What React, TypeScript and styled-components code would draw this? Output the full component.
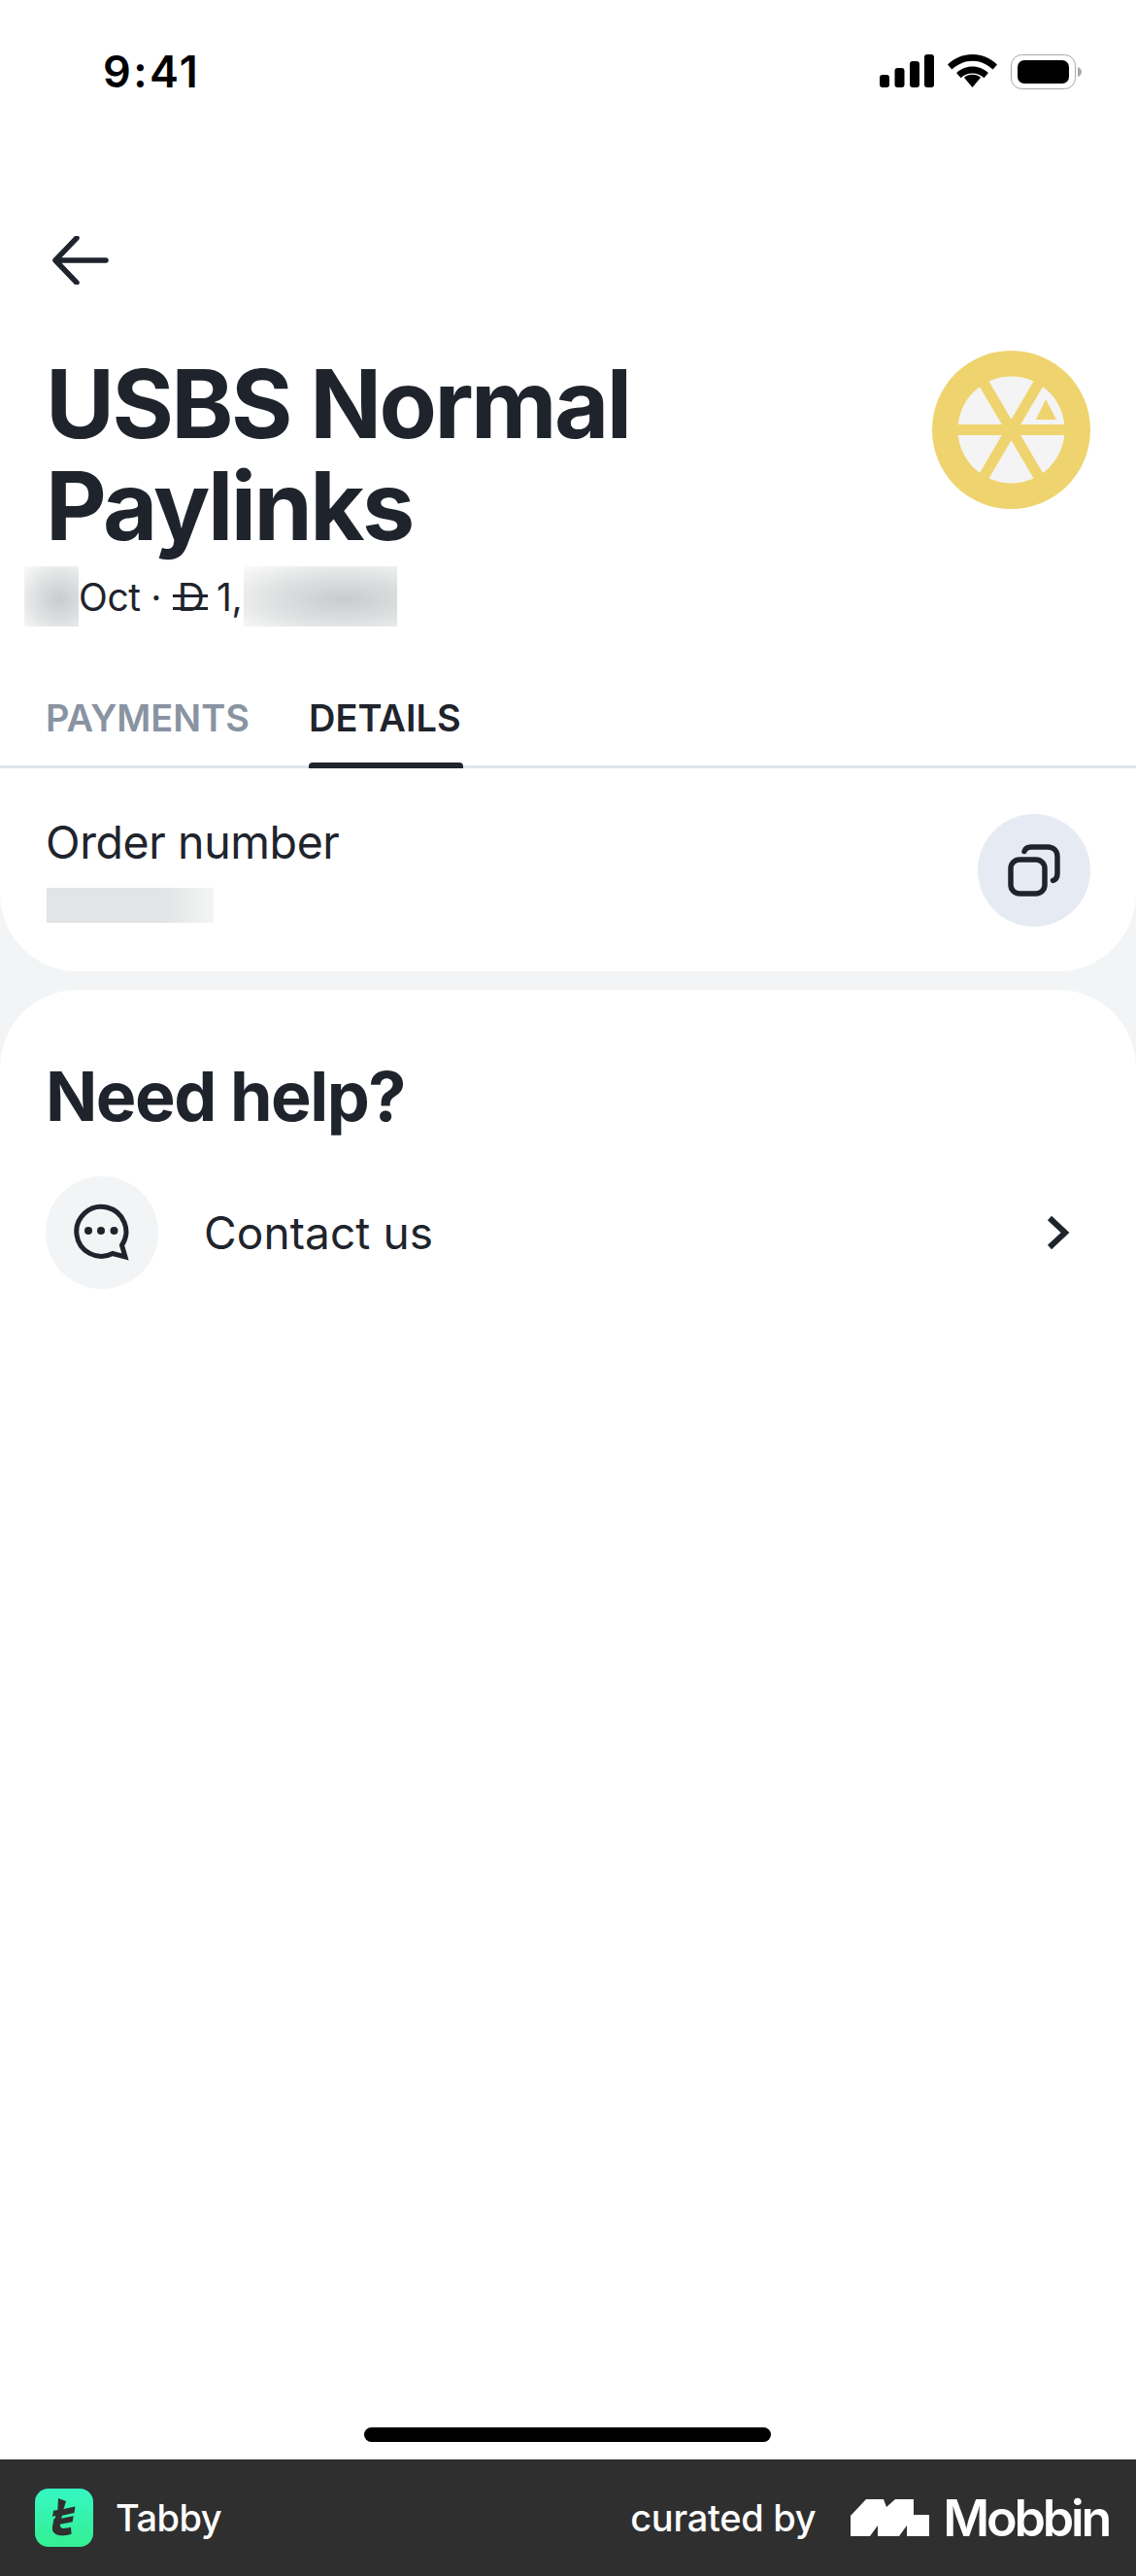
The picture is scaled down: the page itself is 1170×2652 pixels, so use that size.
import React from 'react';
import styled, { createGlobalStyle } from 'styled-components';

const GlobalStyle = createGlobalStyle`
  html, body {
    margin: 0;
    padding: 0;
    background: #fff;
  }
  * {
    box-sizing: border-box;
  }
`;

const ink = '#1f242c';
const font = `Inter, "Liberation Sans", sans-serif`;

const Screen = styled.div`
  width: 1170px;
  height: 2652px;
  display: flex;
  flex-direction: column;
  background: #f2f4f5;
  font-family: ${font};
  color: ${ink};
  overflow: hidden;
`;

const StatusBar = styled.div`
  height: 146px;
  flex-shrink: 0;
  padding: 52px 55px 0 106px;
  display: flex;
  justify-content: space-between;
  align-items: flex-start;
  background: #fff;
`;

const Clock = styled.div`
  font-size: 45px;
  line-height: 44px;
  font-weight: 600;
  letter-spacing: 2.4px;
  color: #000;
`;

const StatusIcons = styled.div`
  display: flex;
  align-items: flex-start;
  gap: 14px;
  padding-top: 4px;
`;

const Header = styled.div`
  background: #fff;
  flex-shrink: 0;
  padding: 0 47px;
`;

const BackRow = styled.div`
  height: 217px;
  padding: 97px 0 0 7px;
`;

const TitleRow = styled.div`
  display: flex;
  justify-content: space-between;
  align-items: flex-start;
`;

const Title = styled.h1`
  margin: 0;
  font-size: 97px;
  line-height: 105px;
  font-weight: 700;
  letter-spacing: -2.6px;
  width: 700px;
`;

const Avatar = styled.svg`
  width: 163px;
  height: 163px;
  flex-shrink: 0;
  margin-top: -2px;
`;

const MetaRow = styled.div`
  display: flex;
  align-items: center;
  height: 66px;
  margin: 8px 0 0 -22px;
  font-size: 39px;
  letter-spacing: -0.4px;
`;

const Smudge = styled.span<{ $width: number }>`
  width: ${p => p.$width}px;
  height: 62px;
  flex-shrink: 0;
  background: radial-gradient(ellipse at 65% 55%, #c9cccd 0%, #dcdedf 45%, #fbfbfb 100%);
`;

const MetaText = styled.span`
  padding: 0 2px 0 0;
  white-space: pre;
`;

const Dirham = styled.span`
  position: relative;
  display: inline-block;
  margin: 0 2px 0 6px;

  &::after {
    content: '';
    position: absolute;
    left: -5px;
    right: -4px;
    top: 21px;
    height: 10px;
    border-top: 3px solid ${ink};
    border-bottom: 3px solid ${ink};
  }
`;

const Tabs = styled.div`
  display: flex;
  gap: 61px;
  height: 144px;
  margin: 0 -47px;
  padding: 64px 47px 0;
  border-bottom: 3px solid #dfe5ee;
  font-size: 38px;
  font-weight: 600;
`;

const Tab = styled.div<{ $active?: boolean }>`
  position: relative;
  height: 80px;
  padding-top: 6px;
  line-height: 44px;
  color: ${p => (p.$active ? ink : '#8993a1')};

  &::after {
    content: '';
    display: ${p => (p.$active ? 'block' : 'none')};
    position: absolute;
    left: 0;
    right: -2px;
    bottom: 0;
    height: 6px;
    border-radius: 4px 4px 0 0;
    background: ${ink};
  }
`;

const OrderCard = styled.div`
  height: 209px;
  flex-shrink: 0;
  background: #fff;
  border-radius: 0 0 80px 80px;
  padding: 49px 47px 0;
  display: flex;
  justify-content: space-between;
`;

const OrderLabel = styled.div`
  font-size: 46.5px;
  line-height: 54px;
  letter-spacing: -0.4px;
`;

const OrderValue = styled.div`
  width: 172px;
  height: 36px;
  margin: 20px 0 0 1px;
  background: linear-gradient(90deg, #e3e4e5 0%, #e2e4e5 70%, #f4f5f5 100%);
`;

const CircleButton = styled.div<{ $bg: string }>`
  width: 116px;
  height: 116px;
  border-radius: 50%;
  background: ${p => p.$bg};
  display: flex;
  align-items: center;
  justify-content: center;
  flex-shrink: 0;
`;

const CopyButton = styled(CircleButton)`
  margin-top: -2px;
`;

const HelpCard = styled.div`
  flex: 1;
  margin-top: 19px;
  background: #fff;
  border-radius: 80px 80px 0 0;
  padding: 68px 47px 0;
  position: relative;
`;

const HelpTitle = styled.h2`
  margin: 0;
  font-size: 70px;
  line-height: 84px;
  font-weight: 700;
  letter-spacing: -1.5px;
`;

const ContactRow = styled.div`
  display: flex;
  align-items: center;
  margin-top: 40px;
`;

const ContactLabel = styled.div`
  flex: 1;
  margin-left: 47px;
  font-size: 46px;
  font-weight: 400;
  letter-spacing: 0.1px;
`;

const Chevron = styled.svg`
  width: 24px;
  height: 36px;
  margin-right: 21px;
`;

const HomeIndicator = styled.div`
  position: absolute;
  left: 375px;
  bottom: 18px;
  width: 419px;
  height: 15px;
  border-radius: 8px;
  background: #000;
`;

const Footer = styled.div`
  height: 120px;
  flex-shrink: 0;
  background: #2f2f2f;
  color: #fff;
  display: flex;
  align-items: center;
  justify-content: space-between;
  padding: 0 28px 0 36px;
`;

const FooterGroup = styled.div`
  display: flex;
  align-items: center;
`;

const AppIcon = styled.div`
  width: 60px;
  height: 60px;
  border-radius: 14px;
  background: linear-gradient(180deg, #36f7c4 0%, #34ef92 100%);
  display: flex;
  align-items: center;
  justify-content: center;
  color: #2f2f2f;
`;

const AppName = styled.span`
  margin-left: 23px;
  font-size: 38px;
  font-weight: 500;
  letter-spacing: -0.5px;
`;

const Curated = styled.span`
  font-size: 38px;
  font-weight: 500;
  letter-spacing: -0.3px;
  margin-right: 36px;
`;

const MobbinName = styled.span`
  margin-left: 14px;
  font-size: 52px;
  font-weight: 600;
  letter-spacing: -3.2px;
`;

const SignalIcon = () => (
  <svg width="56" height="34" viewBox="0 0 56 34" fill="#000">
    <rect x="0" y="21" width="10" height="13" rx="3" />
    <rect x="15.5" y="14" width="10" height="20" rx="3" />
    <rect x="31" y="7" width="10" height="27" rx="3" />
    <rect x="46" y="0" width="10" height="34" rx="3" />
  </svg>
);

const WifiIcon = () => (
  <svg width="51" height="34" viewBox="0 0 51 34" fill="#000">
    <path d="M25.5 0C15.6 0 7 3.8 0 10.4l4.4 5.2C10.200 10.200 17.400 6.800 25.500 6.800s15.300 3.400 21.100 8.800l4.400-5.200C44 3.800 35.400 0 25.500 0z" />
    <path d="M25.500 12.600c-6.500 0-12 2.400-16.400 6.500l4.400 5.200c3.200-2.900 7.300-4.700 12-4.700s8.800 1.800 12 4.700l4.400-5.200c-4.400-4.100-9.900-6.500-16.400-6.500z" />
    <path d="M25.500 34l8.600-10.200c-2.300-1.900-5.300-3-8.600-3s-6.300 1.100-8.600 3z" />
  </svg>
);

const BatteryIcon = () => (
  <svg width="74" height="36" viewBox="0 0 74 36">
    <rect x="0.5" y="0.5" width="66" height="35" rx="11" fill="none" stroke="#a8a8a8" strokeWidth="1" />
    <rect x="7" y="6" width="53" height="24" rx="7" fill="#000" />
    <path d="M69 13c2.400.8 4 2.800 4 5s-1.600 4.200-4 5z" fill="#a8a8a8" />
  </svg>
);

const ArrowIcon = () => (
  <svg width="58" height="50" viewBox="0 0 58 50" fill="none" stroke={ink} strokeWidth="5.5" strokeLinecap="round" strokeLinejoin="round">
    <path d="M55 25H3M25 2 3 25l22 23" />
  </svg>
);

const CopyIcon = () => (
  <svg width="54" height="54" viewBox="0 0 54 54" fill="none" stroke={ink} strokeWidth="5.5" strokeLinecap="round">
    <rect x="3" y="16" width="35" height="35" rx="9" />
    <path d="M17 7.500C18 4.500 20 3 24 3h17c6 0 10 4 10 10v17c0 4-1.500 6.500-4.500 7.500" />
  </svg>
);

const ChatIcon = () => (
  <svg width="60" height="60" viewBox="0 0 60 60" fill="none">
    <path d="M41 51.500A25.500 25.500 0 1 1 50.500 43L54 55z" stroke={ink} strokeWidth="5" strokeLinejoin="miter" />
    <circle cx="16" cy="28" r="4" fill={ink} />
    <circle cx="29" cy="28" r="4" fill={ink} />
    <circle cx="42.500" cy="28" r="4" fill={ink} />
  </svg>
);

const AvatarMark = () => (
  <Avatar viewBox="0 0 163 163">
    <circle cx="81.500" cy="81.500" r="81.500" fill="#efd36e" />
    <circle cx="81.500" cy="81.500" r="55" fill="#f4f4f4" />
    <path d="M20 81.500h123M50 28l63 107M113 28 50 135" stroke="#efd36e" strokeWidth="11" fill="none" />
    <path d="M117 50l11 21h-21z" fill="#efd36e" />
  </Avatar>
);

const TabbyGlyph = () => (
  <svg width="24" height="42" viewBox="0 0 24 42" fill="currentColor">
    <path d="M6 1l8 3-2.500 8 12-2.500-1 6.500-12.500 2.800-.8 3 12.500-2.600-1 6-12.800 2.600c-.3 3 1.200 4.200 3.600 4.200 2.200 0 4.800-.5 7.500-1.200l.6 7c-3.400 1.100-6.600 1.700-9.500 1.700-6.800 0-11-3.500-10.500-9.400L.5 28l1-5.900 1.200-.3.700-3L0 20l1-6.200 4.400-.9z" />
  </svg>
);

const MobbinMark = () => (
  <svg width="81" height="38" viewBox="0 0 81 38" fill="#fff">
    <path d="M0 38V17L16 0h18l3 8 9-8h19v16h16v22H58V27l-8 11H28V27l-8 11z" />
  </svg>
);

export default function App() {
  return (
    <Screen>
      <GlobalStyle />
      <StatusBar>
        <Clock>9:41</Clock>
        <StatusIcons>
          <SignalIcon />
          <WifiIcon />
          <BatteryIcon />
        </StatusIcons>
      </StatusBar>
      <Header>
        <BackRow>
          <ArrowIcon />
        </BackRow>
        <TitleRow>
          <Title>USBS Normal Paylinks</Title>
          <AvatarMark />
        </TitleRow>
        <MetaRow>
          <Smudge $width={56} />
          <MetaText>Oct · <Dirham>D</Dirham> 1,</MetaText>
          <Smudge $width={158} />
        </MetaRow>
        <Tabs>
          <Tab>PAYMENTS</Tab>
          <Tab $active>DETAILS</Tab>
        </Tabs>
      </Header>
      <OrderCard>
        <div>
          <OrderLabel>Order number</OrderLabel>
          <OrderValue />
        </div>
        <CopyButton $bg="#e6ebf3">
          <CopyIcon />
        </CopyButton>
      </OrderCard>
      <HelpCard>
        <HelpTitle>Need help?</HelpTitle>
        <ContactRow>
          <CircleButton $bg="#f2f4f5">
            <ChatIcon />
          </CircleButton>
          <ContactLabel>Contact us</ContactLabel>
          <Chevron viewBox="0 0 24 36" fill="none" stroke={ink} strokeWidth="6">
            <path d="M3 3l16 15L3 33" />
          </Chevron>
        </ContactRow>
        <HomeIndicator />
      </HelpCard>
      <Footer>
        <FooterGroup>
          <AppIcon>
            <TabbyGlyph />
          </AppIcon>
          <AppName>Tabby</AppName>
        </FooterGroup>
        <FooterGroup>
          <Curated>curated by</Curated>
          <MobbinMark />
          <MobbinName>Mobbin</MobbinName>
        </FooterGroup>
      </Footer>
    </Screen>
  );
}
